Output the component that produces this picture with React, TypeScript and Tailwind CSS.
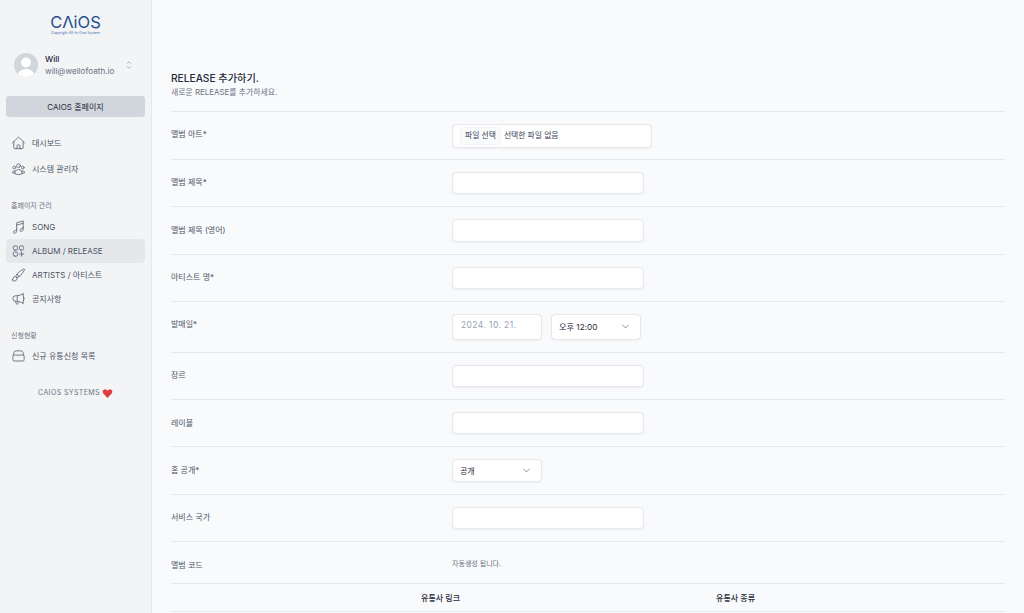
import React from 'react';
import {
  HiOutlineChevronUpDown,
  HiOutlineChevronDown,
  HiOutlineHome,
  HiOutlineUserGroup,
  HiOutlineMusicalNote,
  HiOutlineSquaresPlus,
  HiOutlinePaintBrush,
  HiOutlineMegaphone,
} from 'react-icons/hi2';

const font = 'font-[Inter,"Noto_Sans_CJK_KR",sans-serif]';

const BoxIcon = () => (
  <svg viewBox="0 0 24 24" fill="none" stroke="currentColor" strokeWidth="1.5" strokeLinejoin="round" className="h-[1em] w-[1em]">
    <path d="M3.500 11l1.500-5a3 3 0 0 1 2.900-2.200h8.200A3 3 0 0 1 19 6l1.500 5" />
    <path d="M5 10.500h14a2 2 0 0 1 2 2v5.500a2 2 0 0 1-2 2H5a2 2 0 0 1-2-2v-5.500a2 2 0 0 1 2-2z" />
  </svg>
);

const NavItem: React.FC<{ icon: React.ReactNode; label: string; active?: boolean }> = ({ icon, label, active }) => (
  <div className={`flex h-6 items-center gap-[6px] rounded-[4px] px-[5px] text-[8px] text-gray-600 ${active ? 'bg-gray-200' : ''}`}>
    <span className="flex w-[15px] justify-center text-[16px] text-gray-500">{icon}</span>
    <span>{label}</span>
  </div>
);

const Sidebar = () => (
  <aside className="flex w-[152px] shrink-0 flex-col border-r border-gray-200 bg-[#f3f4f6] px-1.5">
    <div className="flex flex-col items-center pt-[14px] text-[#1f4f8f]">
      <span className="text-[16.500px] leading-[17px] font-normal">CΛiOS</span>
      <span className="text-[3.600px] leading-[4px] text-[#3f6fb5]">Copyright All-In-One System</span>
    </div>
    <div className="mt-[18px] flex items-center px-2">
      <div className="flex h-6 w-6 items-end justify-center overflow-hidden rounded-full bg-gray-300">
        <svg viewBox="0 0 24 24" className="h-6 w-6 fill-white">
          <circle cx="12" cy="9.500" r="5" />
          <path d="M3 24c1-6 5-8 9-8s8 2 9 8z" />
        </svg>
      </div>
      <div className="ml-[7px] flex-1 text-[8.150px] text-gray-600">
        <div className="leading-[12px] font-medium text-gray-800">Will</div>
        <div className="leading-[12px] text-gray-500">will@wellofoath.io</div>
      </div>
      <HiOutlineChevronUpDown className="mr-[2px] text-[12px] text-gray-400" />
    </div>
    <div className="mt-[19px] flex h-[21px] items-center justify-center rounded-[3px] bg-gray-300 text-[8px] font-normal text-gray-800">
      CAIOS 홈페이지
    </div>
    <div className="mt-[14px] flex flex-col gap-[2px]">
      <NavItem icon={<HiOutlineHome />} label="대시보드" />
      <NavItem icon={<HiOutlineUserGroup />} label="시스템 관리자" />
    </div>
    <div className="mt-[20px] mb-[4px] px-[5px] text-[7px] leading-[10px] text-gray-500">홈페이지 관리</div>
    <div className="flex flex-col">
      <NavItem icon={<HiOutlineMusicalNote />} label="SONG" />
      <NavItem icon={<HiOutlineSquaresPlus />} label="ALBUM / RELEASE" active />
      <NavItem icon={<HiOutlinePaintBrush />} label="ARTISTS / 아티스트" />
      <NavItem icon={<HiOutlineMegaphone />} label="공지사항" />
    </div>
    <div className="mt-[20px] mb-[3px] px-[5px] text-[7px] leading-[10px] text-gray-500">신청현황</div>
    <NavItem icon={<BoxIcon />} label="신규 유통신청 목록" />
    <div className="mt-[20px] flex items-center justify-center gap-[2px] text-[7px] tracking-[0.4px] text-gray-500">
      CAIOS SYSTEMS
      <svg viewBox="0 0 24 24" className="h-[11px] w-[11px] fill-[#e0393e]">
        <path d="M12 22 2.500 11.500C-.5 7 3.500 2 8 3c2 .4 3.200 1.600 4 3 .8-1.400 2-2.600 4-3 4.500-1 8.500 4 5.500 8.500z" />
      </svg>
    </div>
  </aside>
);

const inputBox = 'rounded-[4px] border border-gray-200 bg-white shadow-xs';

const Row: React.FC<{ label: string; children: React.ReactNode; className?: string }> = ({ label, children, className }) => (
  <div className={`flex border-t border-gray-200 pt-3 ${className ?? 'pb-3'}`}>
    <div className="w-[281px] pt-[4.400px] text-[8px] leading-[12px] text-gray-600">{label}</div>
    <div>{children}</div>
  </div>
);

const TextRow: React.FC<{ label: string }> = ({ label }) => (
  <Row label={label}>
    <div className={`h-[22.300px] w-[192px] ${inputBox}`} />
  </Row>
);

export default function App() {
  return (
    <div className={`flex h-screen overflow-hidden bg-[#f9fafb] antialiased ${font}`}>
      <Sidebar />
      <main className="flex-1 overflow-hidden px-[19px] pt-[71px]">
        <h1 className="text-[10.200px] leading-[15px] font-medium text-gray-800">RELEASE 추가하기.</h1>
        <p className="text-[7.900px] leading-[12px] text-gray-500">새로운 RELEASE를 추가하세요.</p>
        <div className="mt-[13px]">
          <Row label="앨범 아트*" className="pb-[11px]">
            <div className={`flex h-6 w-[200px] items-center gap-[3px] px-[7px] text-[7.800px] text-gray-700 ${inputBox}`}>
              <span className="rounded-[4px] border border-gray-100 bg-gray-50 px-[4px] py-[2px]">파일 선택</span>
              <span>선택한 파일 없음</span>
            </div>
          </Row>
          <TextRow label="앨범 제목*" />
          <TextRow label="앨범 제목 (영어)" />
          <TextRow label="아티스트 명*" />
          <Row label="발매일*">
            <div className="flex gap-[9px]">
              <div className={`flex h-[26px] w-[90px] items-center px-2 pb-[3px] text-[8.500px] tracking-[0.4px] text-gray-400 ${inputBox}`}>2024. 10. 21.</div>
              <div className={`flex h-[26px] w-[90px] items-center justify-between pr-[10px] pl-[7px] text-[8.200px] font-normal text-gray-800 ${inputBox}`}>
                오후 12:00
                <HiOutlineChevronDown className="text-[9px] text-gray-700" />
              </div>
            </div>
          </Row>
          <TextRow label="장르" />
          <TextRow label="레이블" />
          <Row label="홈 공개*">
            <div className={`flex h-[22.300px] w-[90px] items-center justify-between pr-[10px] pl-[7px] text-[8px] font-normal text-gray-800 ${inputBox}`}>
              공개
              <HiOutlineChevronDown className="text-[9px] text-gray-700" />
            </div>
          </Row>
          <TextRow label="서비스 국가" />
          <div className="flex h-[42px] border-t border-gray-200 pt-[17px]">
            <div className="w-[281px] text-[8px] leading-[12px] text-gray-600">앨범 코드</div>
            <div className="text-[7px] leading-[10px] text-gray-500">자동생성 됩니다.</div>
          </div>
          <div className="flex h-[29px] items-center border-t border-b border-gray-200 text-[8px] font-medium text-gray-800">
            <div className="w-[289px] text-right">유통사 링크</div>
            <div className="w-[295px] text-right">유통사 종류</div>
          </div>
        </div>
      </main>
    </div>
  );
}
